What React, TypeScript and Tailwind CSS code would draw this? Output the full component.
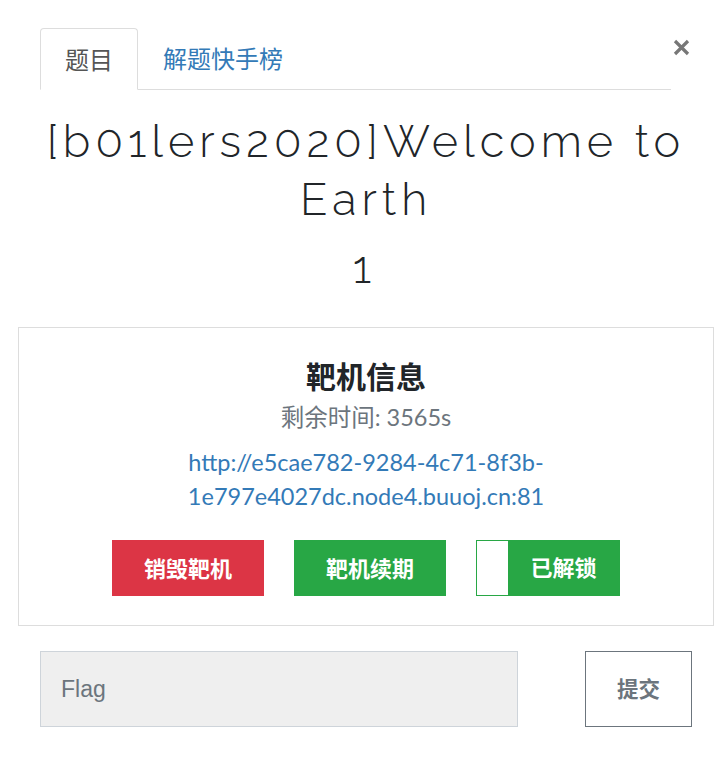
import React from "react";

const cjk = "font-['Lato','Noto_Sans_CJK_SC',sans-serif]";

function TargetCard() {
  return (
    <div className="mr-[10px] ml-[18px] border border-[#dddddd] pt-[29px] pb-[29px] text-center">
      <h4 className="text-[30px] leading-[38px] font-bold text-[#212529]">靶机信息</h4>
      <p className="mt-[7px] text-[23.5px] leading-[30px] text-[#6c757d]">
        剩余时间: 3565s
      </p>
      <a
        href="#"
        className="mx-auto mt-[13px] block w-[420px] text-[23.5px] leading-[34px] text-[#337ab7]"
      >
        http://e5cae782-9284-4c71-8f3b-1e797e4027dc.node4.buuoj.cn:81
      </a>
      <div className="mt-[27px] flex justify-center gap-[30px]">
        <button className="h-[56px] w-[152px] bg-[#dc3545] text-[22px] font-bold text-white">
          销毁靶机
        </button>
        <button className="h-[56px] w-[152px] bg-[#28a745] text-[22px] font-bold text-white">
          靶机续期
        </button>
        <button className="flex h-[56px] w-[144px] border border-[#28a745] bg-[#28a745]">
          <span className="h-full w-[31px] bg-white" />
          <span className="flex-1 text-center text-[22px] leading-[54px] font-bold text-white">
            已解锁
          </span>
        </button>
      </div>
    </div>
  );
}

export default function App() {
  return (
    <div className={`w-[724px] h-[770px] bg-white ${cjk}`}>
      <div className="flex items-start pt-[28px] pl-[40px]">
        <ul className="flex w-[631px] border-b border-[#dddddd] font-['Noto_Sans_CJK_SC',sans-serif]">
          <li className="-mb-px h-[62px] rounded-t-[4px] border border-b-white border-[#dddddd] bg-white px-[24px] text-[24px] leading-[60px] text-[#555555]">
            题目
          </li>
          <li className="ml-[1px] h-[61px] px-[24px] text-[24px] leading-[60px] text-[#337ab7]">
            解题快手榜
          </li>
        </ul>
        <button className="-ml-[2px] mt-[5px] flex h-[28px] w-[24px] items-center justify-center text-[#777777]">
          <svg width="17" height="17" viewBox="0 0 17 17">
            <path d="M2 2 L15 15 M15 2 L2 15" stroke="currentColor" strokeWidth="3.2" />
          </svg>
        </button>
      </div>

      <h3 className="mt-[23px] pl-[28px] pr-[20px] text-center font-['Raleway','Lato',sans-serif] text-[45px] leading-[58px] font-light tracking-[5px] text-[#212529]">
        [b01lers2020]Welcome to Earth
      </h3>
      <h3 className="mt-[10px] text-center font-['Raleway','Lato',sans-serif] text-[45px] leading-[58px] font-light text-[#212529]">
        1
      </h3>

      <div className="mt-[30px]">
        <TargetCard />
      </div>

      <div className="mt-[25px] flex items-stretch pl-[40px]">
        <input
          placeholder="Flag"
          className="h-[76px] w-[478px] border border-[#ced4da] bg-[#efefef] px-[20px] font-['Liberation_Sans',sans-serif] text-[23px] text-[#495057] placeholder:text-[#6c757d] outline-none"
        />
        <button className="ml-[67px] h-[76px] w-[107px] border border-[#6c757d] bg-white text-[21.5px] font-bold text-[#6c757d]">
          提交
        </button>
      </div>
    </div>
  );
}
